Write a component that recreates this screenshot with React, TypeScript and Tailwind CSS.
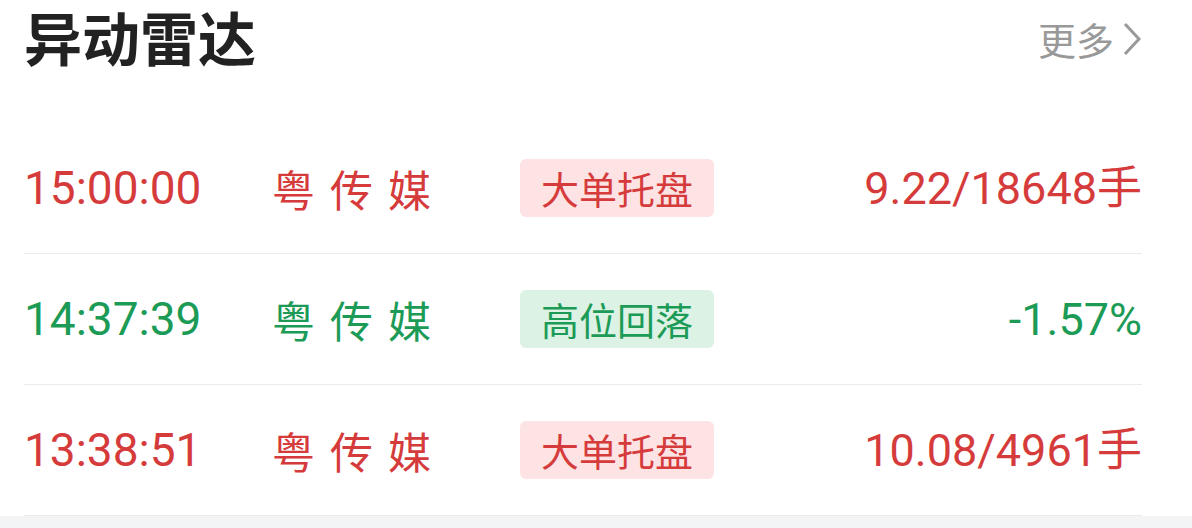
import React from "react";

type Item = {
  time: string;
  name: string;
  tag: string;
  value: string;
  up: boolean;
};

const items: Item[] = [
  { time: "15:00:00", name: "粤传媒", tag: "大单托盘", value: "9.22/18648手", up: true },
  { time: "14:37:39", name: "粤传媒", tag: "高位回落", value: "-1.57%", up: false },
  { time: "13:38:51", name: "粤传媒", tag: "大单托盘", value: "10.08/4961手", up: true },
];

const numFont = "font-['Roboto','Noto_Sans_CJK_SC',sans-serif]";
const cjkFont = "font-['Noto_Sans_CJK_SC',sans-serif]";

export default function App() {
  return (
    <div className="w-[1192px] h-[528px] overflow-hidden bg-white flex flex-col">
      <div className="h-[123px] pl-6 pr-[50px] flex items-start justify-between">
        <h2 className={`${cjkFont} text-[58px] leading-[72px] font-semibold text-[#222222] whitespace-nowrap`}>
          异动雷达
        </h2>
        <div className="flex items-center gap-2 pt-[19px] text-[#999999]">
          <span className={`${cjkFont} text-[38px] leading-[40px]`}>更多</span>
          <svg width="20" height="34" viewBox="0 0 20 34" fill="none" stroke="currentColor" strokeWidth="3">
            <path d="M3 2 L17 17 L3 32" />
          </svg>
        </div>
      </div>

      <div className="pl-6 pr-[50px]">
        {items.map((it, i) => (
          <div
            key={i}
            className={`h-[131px] flex items-center border-b border-[#ebebeb] ${it.up ? "text-[#d63b3c]" : "text-[#1c9b57]"}`}
          >
            <div className={`${numFont} w-[248px] text-[46px] leading-none`}>{it.time}</div>
            <div className={`${cjkFont} w-[248px] text-[43px] leading-none tracking-[15px]`}>{it.name}</div>
            <div
              className={`${cjkFont} h-[58px] px-[21px] rounded-md flex items-center text-[38px] leading-none ${
                it.up ? "bg-[#fde3e4]" : "bg-[#dbf2e5]"
              }`}
            >
              {it.tag}
            </div>
            <div className={`${numFont} flex-1 text-right text-[45px] leading-none`}>{it.value}</div>
          </div>
        ))}
      </div>
      <div className="flex-1 bg-[#f3f4f6]" />
    </div>
  );
}
